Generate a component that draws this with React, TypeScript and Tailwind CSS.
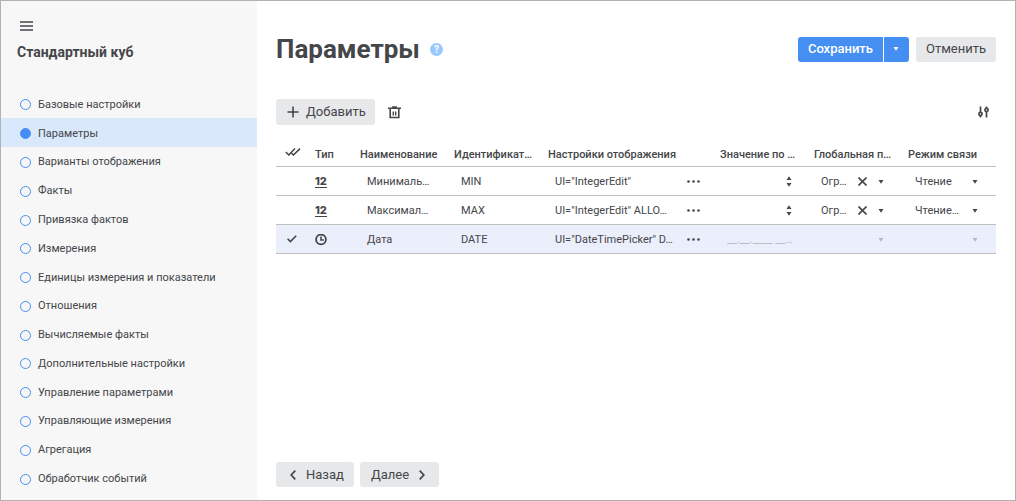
import { useState } from 'react';

const sections = [
  'Базовые настройки',
  'Параметры',
  'Варианты отображения',
  'Факты',
  'Привязка фактов',
  'Измерения',
  'Единицы измерения и показатели',
  'Отношения',
  'Вычисляемые факты',
  'Дополнительные настройки',
  'Управление параметрами',
  'Управляющие измерения',
  'Агрегация',
  'Обработчик событий',
];

const rows = [
  { kind: 'number', name: 'Минималь…', id: 'MIN', view: 'UI="IntegerEdit"', global: 'Огр…', mode: 'Чтение' },
  { kind: 'number', name: 'Максимал…', id: 'MAX', view: 'UI="IntegerEdit" ALLO…', global: 'Огр…', mode: 'Чтение…' },
  { kind: 'date', name: 'Дата', id: 'DATE', view: 'UI="DateTimePicker" D…', global: '', mode: '' },
];

const headers = ['Наименование', 'Идентификат…', 'Настройки отображения', 'Значение по …', 'Глобальная п…', 'Режим связи'];

function Caret({ className = '' }: { className?: string }) {
  return (
    <svg viewBox="0 0 6 4" className={`w-[6px] h-1 shrink-0 ${className}`} fill="currentColor" aria-hidden="true">
      <path d="M0.5 0h5L3 3.8z" />
    </svg>
  );
}

function Check() {
  return (
    <svg viewBox="0 0 12 8" className="w-3 h-2 pointer-events-none" fill="none" stroke="currentColor" strokeWidth="1.6" aria-hidden="true">
      <path d="M1.6 3.8l2.8 2.8L10.2 0.8" />
    </svg>
  );
}

function TypeIcon({ kind }: { kind: string }) {
  if (kind === 'number') {
    return <span className="inline-block border-b border-[#444] font-[Inter,sans-serif] font-extrabold text-[11px] leading-[11px]">12</span>;
  }
  return (
    <svg viewBox="0 0 12 12" className="w-3 h-3" fill="none" stroke="currentColor" aria-label="Дата">
      <circle cx="6" cy="5.5" r="4.9" strokeWidth="1.8" />
      <path d="M6 2.5v3.6H8.8" strokeWidth="1.5" />
    </svg>
  );
}

export default function App() {
  const [active, setActive] = useState(1);
  const [selected, setSelected] = useState(2);

  return (
    <div className="flex min-h-screen bg-white border border-[#b2b2b2] font-[Roboto,sans-serif] text-[#444649]">
      <aside className="w-64 shrink-0 bg-[#f7f7f7] flex flex-col">
        <button aria-label="Меню" className="w-[13px] ml-[19px] mt-5 cursor-pointer">
          <svg viewBox="0 0 13 10" className="block w-[13px] h-[10px]" stroke="currentColor" strokeWidth="1.3">
            <path d="M0 1h13M0 5h13M0 9h13" />
          </svg>
        </button>
        <h2 className="px-4 mt-[11px] mb-[27px] text-sm leading-5 font-bold">Стандартный куб</h2>
        <nav className="flex-1 flex flex-col pb-2">
          {sections.map((title, i) => (
            <a
              key={title}
              href="#"
              onClick={(e) => { e.preventDefault(); setActive(i); }}
              className={`flex-1 flex items-center gap-[7px] pl-[19px] pt-[3px] text-[11px] leading-4 ${i === active ? 'bg-[#d9e8fb]' : ''}`}
            >
              <span className={`w-[11px] h-[11px] rounded-full border shrink-0 border-[#468ff2] ${i === active ? 'bg-[#468ff2]' : ''}`} />
              {title}
            </a>
          ))}
        </nav>
      </aside>

      <main className="flex-1 min-w-0 flex flex-col pl-[19px] pr-[19px] pt-8 pb-[13px]">
        <header className="flex items-center justify-between h-8">
          <div className="flex items-center gap-[10px]">
            <h1 className="text-[26px] leading-8 font-bold">Параметры</h1>
            <button aria-label="Справка" className="w-[13px] h-[13px] rounded-full bg-[#99c8ff] text-white text-[10px] leading-[13px] font-bold cursor-pointer">?</button>
          </div>
          <div className="flex text-[13px] leading-4">
            <button className="h-[25px] px-[10px] rounded-l-[3px] bg-[#468ff2] text-white font-medium cursor-pointer">Сохранить</button>
            <button aria-label="Другие варианты сохранения" className="h-[25px] w-[25px] ml-px rounded-r-[3px] bg-[#468ff2] text-white flex items-center justify-center cursor-pointer">
              <Caret />
            </button>
            <button className="h-[25px] px-[10px] ml-[7px] rounded-[3px] bg-[#e7e8ea] cursor-pointer">Отменить</button>
          </div>
        </header>

        <div className="flex items-center mt-[34px]">
          <button className="h-[26px] pl-[11px] pr-[9px] flex items-center gap-[7px] rounded-[3px] bg-[#e7e8ea] text-[13px] leading-4 cursor-pointer">
            <svg viewBox="0 0 12 12" className="w-3 h-3" stroke="currentColor" strokeWidth="1.6">
              <path d="M6 0.5v11M0.5 6h11" />
            </svg>
            Добавить
          </button>
          <button aria-label="Удалить" className="ml-[13px] cursor-pointer">
            <svg viewBox="0 0 13 13" className="w-[13px] h-[13px]" fill="none" stroke="currentColor" strokeWidth="1.5">
              <path d="M0 2.3h13M4.2 1.1h4.6M2.2 2.5v9h8.6v-9" strokeWidth="1.6" />
              <path d="M5.3 5.5v4M7.7 5.5v4" strokeWidth="1.4" />
            </svg>
          </button>
          <button aria-label="Настройка столбцов" className="ml-auto mr-[6px] cursor-pointer">
            <svg viewBox="0 0 13 12" className="w-[13px] h-3" fill="none" stroke="currentColor" strokeWidth="1.7">
              <path d="M3.5 0.5v6M3.5 9.5v2M9.5 0.5v2M9.5 5.5v6" />
              <circle cx="3.5" cy="8" r="1.6" />
              <circle cx="9.5" cy="4" r="1.6" />
            </svg>
          </button>
        </div>

        <table className="w-full table-fixed mt-[15px] text-[11px] leading-4">
          <colgroup>
            <col className="w-[33px]" />
            <col className="w-[45px]" />
            <col className="w-[94px]" />
            <col className="w-[94px]" />
            <col />
            <col className="w-[94px]" />
            <col className="w-[94px]" />
            <col className="w-[94px]" />
          </colgroup>
          <thead>
            <tr className="h-[26px] border-b border-[#bfbfbf] text-left">
              <th className="pl-[9px] pb-[2px]">
                <button aria-label="Выделить все" className="flex cursor-pointer">
                  <svg viewBox="0 0 16 8" className="w-4 h-2" fill="none" stroke="currentColor" strokeWidth="1.5">
                    <path d="M0.8 4l3 3L10 0.6M6.6 5.2l1.8 1.8L15 0.6" />
                  </svg>
                </button>
              </th>
              <th className="pl-[6px] pt-1 font-medium">Тип</th>
              {headers.map((h) => (
                <th key={h} className="pl-[6px] pt-1 font-medium whitespace-nowrap">{h}</th>
              ))}
            </tr>
          </thead>
          <tbody>
            {rows.map((row, i) => (
              <tr key={row.id} className={`h-[29px] border-b border-[#bfbfbf] ${i === selected ? 'bg-[#ebeefb]' : ''}`}>
                <td className="pl-[10px]">
                  <label className="grid items-center w-3 h-3 cursor-pointer">
                    <input
                      type="checkbox"
                      aria-label={row.id}
                      checked={i === selected}
                      onChange={() => setSelected(i)}
                      className="appearance-none col-start-1 row-start-1 w-3 h-3"
                    />
                    {i === selected && <span className="col-start-1 row-start-1"><Check /></span>}
                  </label>
                </td>
                <td className="pl-[6px] pt-[2px]">
                  <div className="flex"><TypeIcon kind={row.kind} /></div>
                </td>
                <td className="pl-[13px] pt-[2px] whitespace-nowrap">{row.name}</td>
                <td className="pl-[13px] pt-[2px] whitespace-nowrap">{row.id}</td>
                <td className="pl-[13px] pt-[2px] pr-[14px]">
                  <div className="flex items-center justify-between whitespace-nowrap">
                    {row.view}
                    <button aria-label="Изменить настройки" className="cursor-pointer">
                      <svg viewBox="0 0 13 3" className="w-[13px] h-[3px]" fill="currentColor">
                        <circle cx="1.5" cy="1.5" r="1.3" />
                        <circle cx="6.5" cy="1.5" r="1.3" />
                        <circle cx="11.5" cy="1.5" r="1.3" />
                      </svg>
                    </button>
                  </div>
                </td>
                <td className="pl-[13px] pt-[2px] pr-4">
                  <div className="flex items-center">
                    <input
                      type="text"
                      aria-label="Значение по умолчанию"
                      placeholder={row.kind === 'date' ? '__.__.____ __…' : undefined}
                      className="flex-1 min-w-0 outline-none placeholder:text-[#b5b7c0]"
                    />
                    {row.kind === 'number' && (
                      <button aria-label="Изменить значение" className="flex flex-col gap-[3px] cursor-pointer">
                        <Caret className="rotate-180" />
                        <Caret />
                      </button>
                    )}
                  </div>
                </td>
                <td className="pl-[13px] pt-[2px] pr-[18px]">
                  <div className="flex items-center">
                    <select aria-label="Глобальная переменная" disabled={!row.global} className="appearance-none flex-1 min-w-0 outline-none opacity-100">
                      <option>{row.global}</option>
                    </select>
                    {row.global && (
                      <button aria-label="Очистить" className="mr-[11px] cursor-pointer">
                        <svg viewBox="0 0 9 9" className="w-[9px] h-[9px]" stroke="currentColor" strokeWidth="1.6">
                          <path d="M0.5 0.5l8 8M8.5 0.5l-8 8" />
                        </svg>
                      </button>
                    )}
                    <Caret className={row.global ? '' : 'text-[#b5b7c0]'} />
                  </div>
                </td>
                <td className="pl-[13px] pt-[2px] pr-[18px]">
                  <div className="flex items-center">
                    <select aria-label="Режим связи" disabled={!row.mode} className="appearance-none flex-1 min-w-0 outline-none opacity-100">
                      <option>{row.mode}</option>
                    </select>
                    <Caret className={row.mode ? '' : 'text-[#b5b7c0]'} />
                  </div>
                </td>
              </tr>
            ))}
          </tbody>
        </table>

        <footer className="flex gap-[6px] mt-auto text-[13px] leading-4">
          <button className="h-[25px] pl-[14px] pr-[10px] flex items-center gap-[10px] rounded-[3px] bg-[#e7e8ea] cursor-pointer">
            <svg viewBox="0 0 6 10" className="w-[6px] h-[10px]" fill="none" stroke="currentColor" strokeWidth="1.7">
              <path d="M5.3 0.6L1.2 5l4.1 4.4" />
            </svg>
            Назад
          </button>
          <button className="h-[25px] pl-[11px] pr-[14px] flex items-center gap-[10px] rounded-[3px] bg-[#e7e8ea] cursor-pointer">
            Далее
            <svg viewBox="0 0 6 10" className="w-[6px] h-[10px]" fill="none" stroke="currentColor" strokeWidth="1.7">
              <path d="M0.7 0.6L4.8 5L0.7 9.4" />
            </svg>
          </button>
        </footer>
      </main>
    </div>
  );
}
